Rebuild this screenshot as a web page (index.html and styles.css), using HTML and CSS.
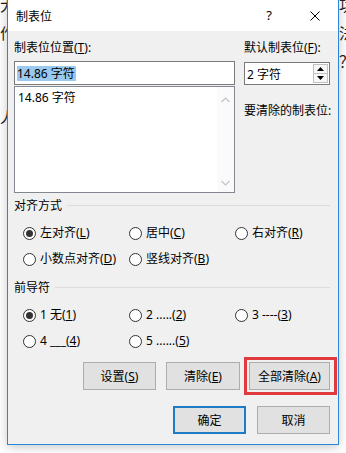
FILE: index.html
```
<!DOCTYPE html>
<html lang="zh-CN">
<head>
<meta charset="utf-8">
<title>制表位</title>
<link rel="stylesheet" href="styles.css">
</head>
<body>
<div class="doc">
  <div class="doc-col">
    <p>大</p>
    <p>作</p>
    <p>&nbsp;</p>
    <p>&nbsp;</p>
    <p>人</p>
  </div>
  <div class="doc-col">
    <p>功</p>
    <p>法</p>
    <p>？</p>
  </div>
</div>

<div class="dialog">
  <div class="titlebar">
    <span class="title">制表位</span>
    <span class="tbtn help">?</span>
    <span class="tbtn close">
      <svg width="10" height="10" viewBox="0 0 10 10"><path d="M0.5 0.5 L9.5 9.5 M9.5 0.5 L0.5 9.5" stroke="#000" stroke-width="1" fill="none"/></svg>
    </span>
  </div>
  <div class="body">
    <div class="top">
      <div class="left">
        <div class="lbl">制表位位置(<u>T</u>):</div>
        <div class="input"><span class="selected">14.86 字符</span></div>
        <div class="list">
          <div class="items"><div class="item">14.86 字符</div></div>
          <div class="scroll">
            <svg width="9" height="6" viewBox="0 0 9 6"><path d="M0.5 5 L4.5 1 L8.5 5" stroke="#c4c4c4" stroke-width="1.2" fill="none"/></svg>
            <svg width="9" height="6" viewBox="0 0 9 6"><path d="M0.5 1 L4.5 5 L8.5 1" stroke="#c4c4c4" stroke-width="1.2" fill="none"/></svg>
          </div>
        </div>
      </div>
      <div class="right">
        <div class="lbl">默认制表位(<u>F</u>):</div>
        <div class="spin">
          <span class="spin-val">2 字符</span>
          <div class="spin-btns">
            <span class="sb"><svg width="7" height="4" viewBox="0 0 7 4"><path d="M0 4 L3.5 0 L7 4 Z" fill="#000"/></svg></span>
            <span class="sb"><svg width="7" height="4" viewBox="0 0 7 4"><path d="M0 0 L3.5 4 L7 0 Z" fill="#000"/></svg></span>
          </div>
        </div>
        <div class="lbl clear-lbl">要清除的制表位:</div>
      </div>
    </div>

    <div class="group-head g1">对齐方式</div>
    <div class="radios">
      <div class="radio on"><i></i>左对齐(<u>L</u>)</div>
      <div class="radio"><i></i>居中(<u>C</u>)</div>
      <div class="radio"><i></i>右对齐(<u>R</u>)</div>
      <div class="radio"><i></i>小数点对齐(<u>D</u>)</div>
      <div class="radio"><i></i>竖线对齐(<u>B</u>)</div>
    </div>

    <div class="group-head g2">前导符</div>
    <div class="radios">
      <div class="radio on"><i></i>1 无(<u>1</u>)</div>
      <div class="radio"><i></i>2 .....(<u>2</u>)</div>
      <div class="radio"><i></i>3 ----(<u>3</u>)</div>
      <div class="radio"><i></i>4 ___(<u>4</u>)</div>
      <div class="radio"><i></i>5 ......(<u>5</u>)</div>
    </div>

    <div class="btn-row">
      <div class="btn w73">设置(<u>S</u>)</div>
      <div class="btn w74 ml10">清除(<u>E</u>)</div>
      <div class="btn w81 ml9 annot">全部清除(<u>A</u>)</div>
    </div>
    <div class="btn-row ok-row">
      <div class="btn w73 default">确定</div>
      <div class="btn w73 ml11">取消</div>
    </div>
  </div>
</div>
</body>
</html>
```
FILE: styles.css
```
* { box-sizing: border-box; }
html, body { margin: 0; }
body {
  width: 346px;
  height: 453px;
  position: relative;
  overflow: hidden;
  background: #ffffff;
  font-family: "Noto Sans", "Noto Sans CJK SC", sans-serif;
  font-size: 12px;
  color: #000;
}
u { text-decoration: underline; text-underline-offset: 1px; }

.doc {
  width: 346px;
  height: 160px;
  overflow: hidden;
  display: flex;
  justify-content: space-between;
  font-family: "Noto Sans CJK SC", sans-serif;
  font-size: 15px;
  line-height: 28px;
  color: #222;
}
.doc-col { width: 7px; overflow: hidden; margin-top: -9px; }
.doc-col p { margin: 0; white-space: nowrap; }

.dialog {
  position: absolute;
  left: 7px;
  top: -1px;
  width: 332px;
  height: 446px;
  border: 1px solid #2b86d6;
  background: #f0f0f0;
  box-shadow: 0 2px 10px rgba(0, 0, 0, 0.22);
  display: flex;
  flex-direction: column;
}

.titlebar {
  height: 31px;
  background: #ffffff;
  display: flex;
  align-items: center;
  padding-left: 8px;
  flex: none;
}
.title { flex: 1; font-family: "Noto Sans CJK SC", sans-serif; font-size: 12px; }
.tbtn {
  width: 46px;
  height: 31px;
  display: flex;
  align-items: center;
  justify-content: center;
}
.help { font-size: 13px; padding-bottom: 1px; }

.body {
  flex: 1;
  padding: 9px 8px 10px 6px;
  display: flex;
  flex-direction: column;
}

.lbl { line-height: 16px; white-space: nowrap; }

.top { display: flex; gap: 9px; }
.left { width: 222px; }
.right { width: 86px; }

.input {
  margin-top: 5px;
  height: 24px;
  border: 1px solid #7a7a7a;
  background: #fff;
  padding: 0 2px;
  display: flex;
  align-items: center;
}
.selected {
  background: #99c9ef;
  line-height: 15px;
  padding: 0 1px 0 0;
}

.list {
  margin-top: 1px;
  height: 107px;
  border: 1px solid #828790;
  background: #fff;
  display: flex;
}
.items { flex: 1; }
.item { padding: 3px 0 0 3px; line-height: 16px; }
.scroll {
  width: 17px;
  background: #fafafa;
  display: flex;
  flex-direction: column;
  justify-content: space-between;
  align-items: center;
  padding: 10px 0 6px;
}

.spin {
  margin-top: 6px;
  height: 23px;
  border: 1px solid #7a7a7a;
  background: #fff;
  display: flex;
  align-items: center;
  padding-left: 2px;
}
.spin-val { flex: 1; }
.spin-btns {
  width: 16px;
  height: 21px;
  display: flex;
  flex-direction: column;
  padding: 1px 1px 1px 0;
}
.sb {
  flex: 1;
  border: 1px solid #c2c2c2;
  background: #f7f7f7;
  display: flex;
  align-items: center;
  justify-content: center;
}
.sb + .sb { border-top: none; }
.clear-lbl { margin-top: 18px; }

.group-head {
  display: flex;
  align-items: center;
  line-height: 16px;
}
.group-head::after {
  content: "";
  flex: 1;
  height: 1px;
  background: #dcdcdc;
  margin: 0 0 2px 5px;
}
.g1 { margin-top: 5px; }
.g2 { margin-top: 13px; }

.radios {
  display: grid;
  grid-template-columns: 106px 106px 1fr;
  row-gap: 10px;
  margin-top: 11px;
  padding-left: 9px;
}
.radio {
  display: flex;
  align-items: center;
  line-height: 16px;
  white-space: nowrap;
}
.radio i {
  flex: none;
  width: 13px;
  height: 13px;
  border: 1px solid #333;
  border-radius: 50%;
  background: #fff;
  margin-right: 4px;
  display: flex;
  align-items: center;
  justify-content: center;
}
.radio.on i::after {
  content: "";
  width: 7px;
  height: 7px;
  border-radius: 50%;
  background: #333;
}

.btn-row {
  display: flex;
  justify-content: flex-end;
  margin-top: 13px;
}
.ok-row { margin-top: 16px; }
.btn {
  height: 28px;
  border: 1px solid #adadad;
  background: #e1e1e1;
  display: flex;
  align-items: center;
  justify-content: center;
  white-space: nowrap;
}
.w73 { width: 73px; }
.w74 { width: 74px; }
.w81 { width: 81px; }
.ml9 { margin-left: 9px; }
.ml10 { margin-left: 10px; }
.ml11 { margin-left: 11px; }
.default { border: 2px solid #1f7bc6; }
.annot { position: relative; }
.annot::after {
  content: "";
  position: absolute;
  left: -6px;
  top: -6px;
  right: -8px;
  bottom: -6px;
  border: 3px solid #e0393e;
}
```
